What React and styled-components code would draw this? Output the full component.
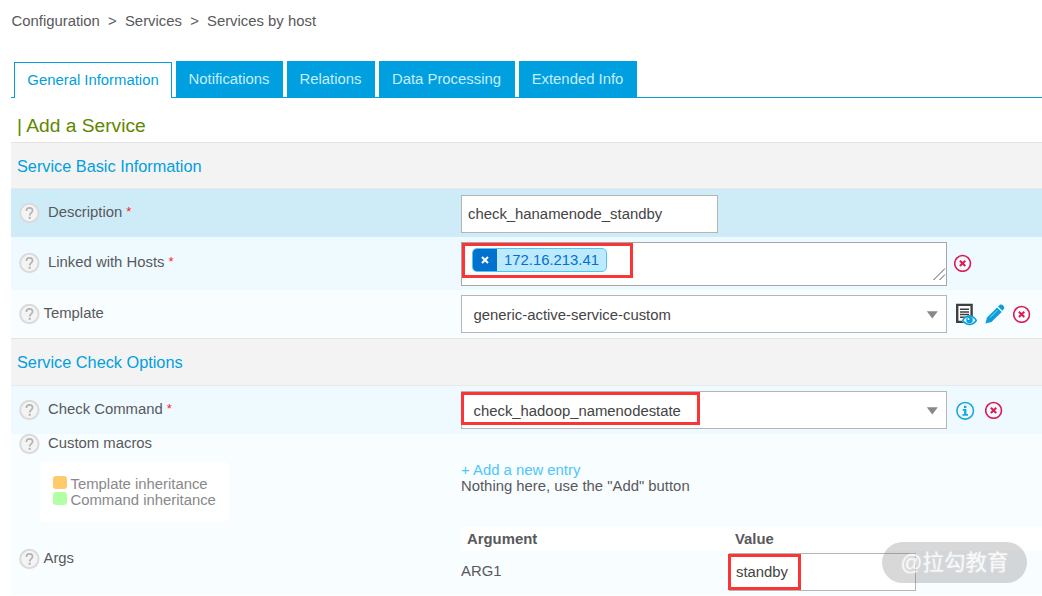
import React from 'react';
import styled, { createGlobalStyle } from 'styled-components';

const GlobalStyle = createGlobalStyle`
  * {
    box-sizing: border-box;
  }

  body {
    margin: 0;
    background: white;
    color: #58595b;
    font-family: 'Liberation Sans', Arial, sans-serif;
    font-size: 14.87px;
    line-height: 16px;
    overflow: hidden;
  }
`;

const Page = styled.div`
  position: relative;
  height: 596px;
  padding-left: 11px;
  overflow: hidden;
`;

const Breadcrumb = styled.nav`
  display: flex;
  gap: 8.2px;
  height: 61px;
  padding: 13px 0 0 0.5px;
`;

const Tabs = styled.div`
  display: flex;
  gap: 4px;
  height: 37px;
  padding-left: 3px;
  background: linear-gradient(#0a9bd8, #0a9bd8) left bottom / 100% 1px no-repeat;
`;

const Tab = styled.div`
  width: ${props => props.$width}px;
  padding: 10px 1px 0 0;
  text-align: center;
  background: #009fdf;
  color: #c5eeff;

  ${props =>
    props.$active &&
    `
    margin-top: 1px;
    background: white;
    color: #009fdf;
    border: 1px solid #009fdf;
    border-bottom: 0;
    padding: 9px 0 0;
  `}
`;

const Title = styled.h3`
  height: 44px;
  margin: 0;
  padding: 17px 0 0 6px;
  color: #5f8700;
  font-size: 19.2px;
  font-weight: 400;
  line-height: 22px;
`;

const Section = styled.h4`
  height: ${props => props.$height}px;
  margin: 0;
  padding: 13px 0 0 6px;
  border-top: 1px solid #e3e3e3;
  border-bottom: 1px solid #e6eaeb;
  background: #f3f3f3;
  color: #009fdf;
  font-size: 16.3px;
  font-weight: 400;
  line-height: 20px;
`;

const Row = styled.div`
  display: grid;
  grid-template-columns: 450px 1fr;
  height: ${props => props.$height}px;
  background: ${props => props.$bg};
`;

const Label = styled.div`
  display: flex;
  align-items: flex-start;
  margin-top: ${props => props.$top}px;
  padding-left: 8px;

  svg {
    flex: none;
    margin-right: ${props => (props.$tight ? 3.5 : 8)}px;
  }

  span {
    padding-top: 2px;
  }

  sup {
    padding: 2px 0 0 4px;
    color: #ff1f1f;
    font-size: 13px;
    line-height: 16px;
  }
`;

const Control = styled.div`
  display: flex;
  align-items: flex-start;
  padding-top: ${props => props.$top}px;
`;

const Field = styled.div`
  position: relative;
  display: flex;
  align-items: center;
  width: ${props => props.$width}px;
  height: ${props => props.$height || 38}px;
  padding-left: 6px;
  border: 1px solid #b5b5b5;
  background: white;
  color: #444;
`;

const Chosen = styled(Field)`
  justify-content: space-between;
  padding: 1px 8px 0 11.5px;
`;

const Hosts = styled(Field)`
  align-items: flex-start;
  padding: 5px 0 0 10px;
  border-color: #a6a6a6;
`;

const Grip = styled.svg`
  position: absolute;
  right: 0;
  bottom: 4px;
`;

const Tag = styled.div`
  display: flex;
  width: 135px;
  height: 24px;
  border: 1px solid #4cc6f8;
  border-radius: 5px;
  overflow: hidden;
  background: #bdeaff;
  color: #0072ce;
  line-height: 22px;

  span {
    padding-left: 7px;
  }
`;

const Remove = styled.div`
  display: flex;
  align-items: center;
  justify-content: center;
  width: 24px;
  background: #0072ce;
`;

// red frame laid over the values that matter
const Mark = styled.div`
  position: absolute;
  left: ${props => props.$left}px;
  top: ${props => props.$top}px;
  width: ${props => props.$width}px;
  height: ${props => props.$height}px;
  border: 3px solid #fb3535;
`;

const Actions = styled.div`
  display: flex;
  align-items: center;
  gap: ${props => props.$gap || 8}px;
  height: ${props => props.$height || 38}px;
  padding-left: ${props => props.$left || 7}px;
`;

const Macros = styled.div`
  display: flex;
  flex-direction: column;
`;

const Legend = styled.div`
  width: 189px;
  height: 60px;
  margin: 7px 0 0 29px;
  padding: 14px 0 0 13px;
  border-radius: 5px;
  background: white;
  color: #88898b;
`;

const LegendItem = styled.div`
  display: flex;
  gap: 3.5px;
  height: 16px;

  &::before {
    content: '';
    width: 14px;
    height: 13px;
    border-radius: 3px;
    background: ${props => props.$color};
  }
`;

const Entries = styled.div`
  padding-top: 28px;
`;

const AddEntry = styled.div`
  color: #4cc6fb;
`;

const ArgsTable = styled.div`
  display: flex;
  flex-direction: column;
`;

const ArgsHead = styled.div`
  display: grid;
  grid-template-columns: 268px 1fr;
  height: 24px;
  padding: 4px 0 0 6px;
  background: white;
  font-weight: 700;
`;

const ArgsRow = styled.div`
  display: grid;
  grid-template-columns: 268px 1fr;
  padding-top: 2px;
`;

const ArgName = styled.span`
  padding-top: 10px;
`;

const Watermark = styled.div`
  position: absolute;
  left: 882px;
  top: 542px;
  width: 145px;
  height: 41px;
  border-radius: 21px;
  background: rgba(110, 110, 110, 0.27);
  color: rgba(255, 255, 255, 0.8);
  font-family: 'Liberation Sans', 'Noto Sans CJK SC', sans-serif;
  font-size: 21.5px;
  line-height: 43px;
  text-align: center;
  text-shadow: 0 0 2px rgba(255, 255, 255, 0.5);
`;

const HelpIcon = () => (
  <svg width='21' height='22' viewBox='0 0 21 22' fill='none'>
    <circle cx='10.4' cy='11' r='9.2' fill='#f4f4f4' stroke='#dadada' strokeWidth='2' />
    <path
      d='M7.4 9c0-2.2 1.3-3.2 3.1-3.2s3.1 1 3.1 2.8c0 2.3-2.9 2.3-2.9 4.8'
      stroke='#b3b3b3'
      strokeWidth='1.7'
    />
    <path d='M9.7 14.8h2v2h-2z' fill='#b0b0b0' />
  </svg>
);

const CloseIcon = () => (
  <svg width='18' height='18' viewBox='0 0 18 18' fill='none' stroke='#e0194f'>
    <circle cx='8.6' cy='9.4' r='7.9' strokeWidth='1.6' />
    <path d='M5.9 6.8l5.4 5.2M11.3 6.8l-5.4 5.2' strokeWidth='2' />
  </svg>
);

const InfoIcon = () => (
  <svg width='19' height='19' viewBox='0 0 19 19' fill='none'>
    <circle cx='9.2' cy='9.8' r='8.3' stroke='#1aa7e0' strokeWidth='1.6' />
    <path d='M8 4.8h2.4v2.1H8zM6.7 8.1h3.7V13h1.6v1.7H6.5V13h1.6V9.7H6.7z' fill='#1aa7e0' />
  </svg>
);

const ViewIcon = () => (
  <svg width='22' height='23' viewBox='0 0 22 23' fill='none'>
    <path d='M2.2 1.9h14.4v17H2.2z' fill='white' stroke='#3f3f41' strokeWidth='2.4' />
    <path d='M5 6.2h9M5 8.9h9M5 11.6h9M5 14.3h6' stroke='#3f3f41' strokeWidth='1.5' />
    <path d='M6 17.5q8.3-10 16.5 0q-8.3 8-16.5 0z' fill='#f8fdff' />
    <path
      d='M7.6 17.4q3.2-4.5 6.9-4.5t6.8 4.5q-3.2 4-6.8 4t-6.9-4z'
      fill='white'
      stroke='#0a9fdc'
      strokeWidth='1.6'
    />
    <circle cx='14.5' cy='17' r='3.3' fill='#0a9fdc' />
    <circle cx='13.5' cy='15.9' r='1' fill='white' />
  </svg>
);

const EditIcon = () => (
  <svg width='20' height='20' viewBox='0 0 20 20' fill='#0a9fdc'>
    <path d='M12.1 3.4l4.6 4.5L6.4 18 .4 19.6 2 13.4z' />
    <path d='M13 2.5L15 .8c1.7-1.3 5.3 2 4 4l-1.7 2z' />
    <path d='M5 13.6l7.4-7.4' stroke='#8dd6f3' strokeWidth='1' />
  </svg>
);

const Arrow = () => (
  <svg width='12' height='8' viewBox='0 0 12 8'>
    <path d='M.8.2h11L6.3 7.5z' fill='#888' />
  </svg>
);

const FormLabel = ({ text, top, required, tight }) => (
  <Label $top={top} $tight={tight}>
    <HelpIcon />
    <span>{text}</span>
    {required && <sup>*</sup>}
  </Label>
);

const tabs = [
  { name: 'General Information', width: 158 },
  { name: 'Notifications', width: 107 },
  { name: 'Relations', width: 88 },
  { name: 'Data Processing', width: 136 },
  { name: 'Extended Info', width: 118 }
];

const App = () => (
  <>
    <GlobalStyle />
    <Page>
      <Breadcrumb>
        <span>Configuration</span>
        <span>&gt;</span>
        <span>Services</span>
        <span>&gt;</span>
        <span>Services by host</span>
      </Breadcrumb>
      <Tabs>
        {tabs.map((tab, i) => (
          <Tab key={tab.name} $width={tab.width} $active={i === 0}>
            {tab.name}
          </Tab>
        ))}
      </Tabs>
      <Title>| Add a Service</Title>

      <Section $height={47}>Service Basic Information</Section>
      <Row $height={48} $bg='#ceecf8'>
        <FormLabel text='Description' top={13} required />
        <Control $top={6}>
          <Field $width={257}>check_hanamenode_standby</Field>
        </Control>
      </Row>
      <Row $height={53} $bg='#eefaff'>
        <FormLabel text='Linked with Hosts' top={15} required />
        <Control $top={5}>
          <Hosts $width={486} $height={44}>
            <Tag>
              <Remove>
                <svg width='8' height='8' viewBox='0 0 8 8' stroke='white' strokeWidth='2'>
                  <path d='M1 1l6 6M7 1L1 7' />
                </svg>
              </Remove>
              <span>172.16.213.41</span>
            </Tag>
            <Grip width='13' height='13' viewBox='0 0 13 13' stroke='#555'>
              <path d='M.5 12L12 .5M6.5 12L12 6.5' />
            </Grip>
            <Mark $left={0} $top={0} $width={171} $height={35} />
          </Hosts>
          <Actions $height={42}>
            <CloseIcon />
          </Actions>
        </Control>
      </Row>
      <Row $height={48} $bg='#f8fdff'>
        <FormLabel text='Template' top={13} tight />
        <Control $top={5}>
          <Chosen $width={486}>
            generic-active-service-custom
            <Arrow />
          </Chosen>
          <Actions $left={8}>
            <ViewIcon />
            <EditIcon />
            <CloseIcon />
          </Actions>
        </Control>
      </Row>

      <Section $height={48}>Service Check Options</Section>
      <Row $height={48} $bg='#eefaff'>
        <FormLabel text='Check Command' top={13} required />
        <Control $top={5}>
          <Chosen $width={486}>
            check_hadoop_namenodestate
            <Arrow />
            <Mark $left={-1} $top={0} $width={239} $height={33} />
          </Chosen>
          <Actions $gap={10} $left={9}>
            <InfoIcon />
            <CloseIcon />
          </Actions>
        </Control>
      </Row>
      <Row $height={93} $bg='#f8fdff'>
        <Macros>
          <FormLabel text='Custom macros' top={-1} />
          <Legend>
            <LegendItem $color='#ffca6b'>Template inheritance</LegendItem>
            <LegendItem $color='#b3ffa6'>Command inheritance</LegendItem>
          </Legend>
        </Macros>
        <Entries>
          <AddEntry>+ Add a new entry</AddEntry>
          <div>Nothing here, use the "Add" button</div>
        </Entries>
      </Row>
      <Row $height={68} $bg='#f8fdff'>
        <FormLabel text='Args' top={21} tight />
        <ArgsTable>
          <ArgsHead>
            <span>Argument</span>
            <span>Value</span>
          </ArgsHead>
          <ArgsRow>
            <ArgName>ARG1</ArgName>
            <Field $width={187}>
              standby
              <Mark $left={-2} $top={0} $width={73} $height={36} />
            </Field>
          </ArgsRow>
        </ArgsTable>
      </Row>
      <Watermark>@拉勾教育</Watermark>
    </Page>
  </>
);

export default App;
